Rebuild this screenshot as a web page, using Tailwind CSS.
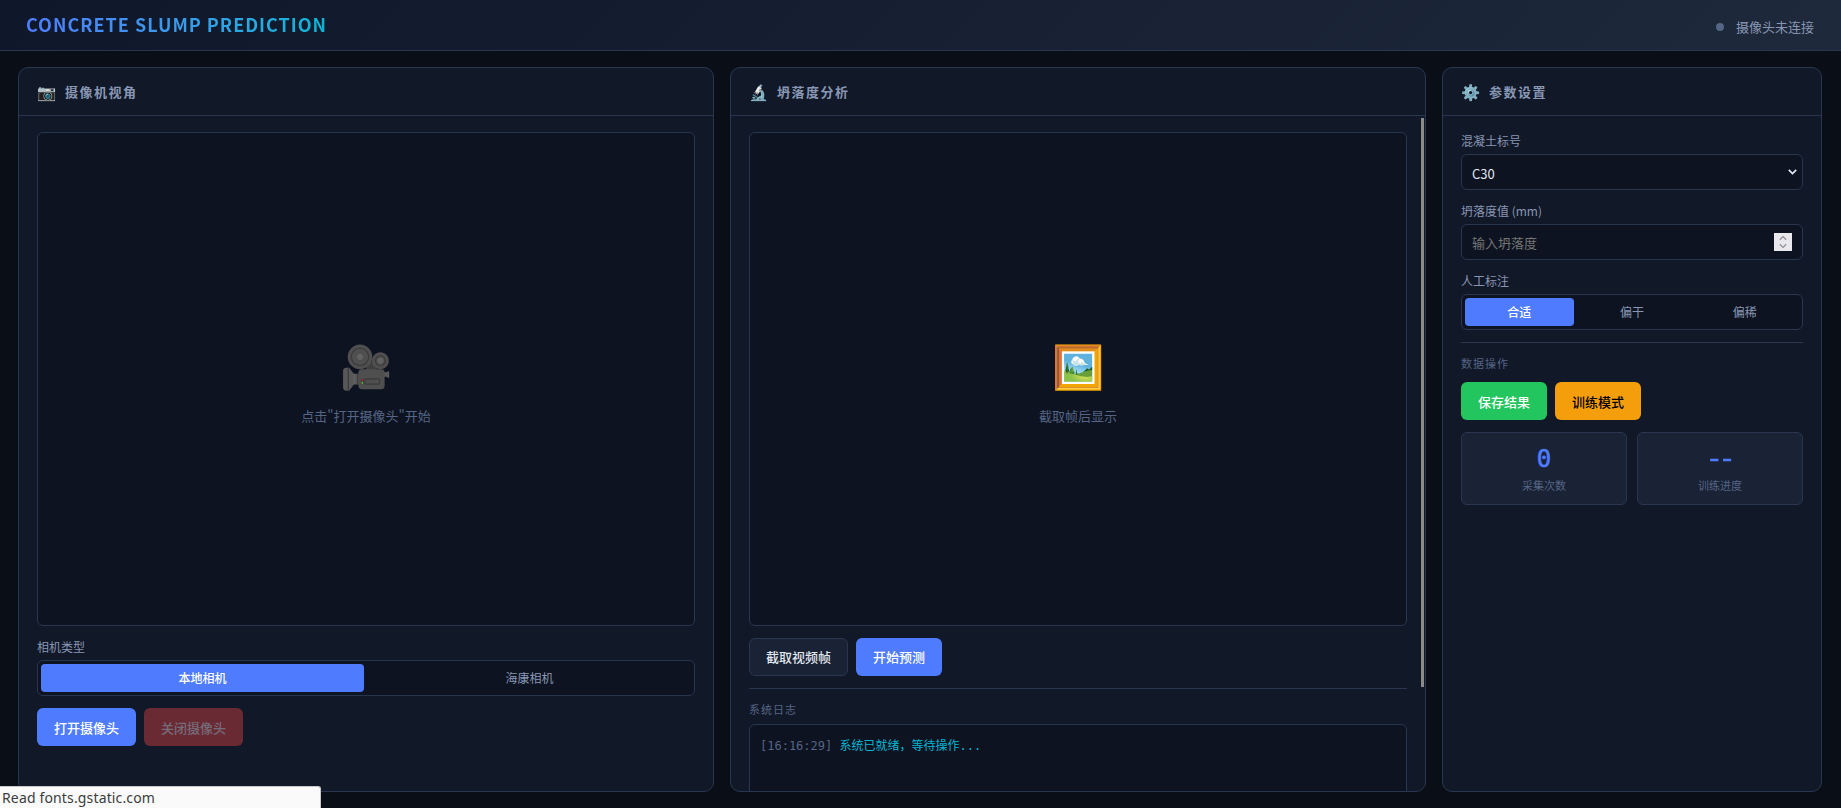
<!DOCTYPE html>
<html lang="zh-CN">
<head>
    <meta charset="UTF-8">
    <meta name="viewport" content="width=device-width, initial-scale=1.0">
    <title>Concrete Slump Prediction</title>
    <script src="https://cdn.jsdelivr.net/npm/@tailwindcss/browser@4"></script>
</head>
<body class="h-screen overflow-hidden flex flex-col bg-[#0a0e17] text-[#e2e8f0] font-['Noto_Sans_CJK_SC',sans-serif] text-[13px]">
    <!-- 顶部 -->
    <header class="h-[51px] shrink-0 flex items-center justify-between pl-[26px] pr-[27px] border-b border-[#2a3650] bg-linear-135 from-[#0f172a] to-[#1e293b]">
        <h1 class="text-[18px] leading-[26px] pb-[2px] font-bold tracking-[1px] bg-linear-90 from-[#4f7cff] to-[#06b6d4] bg-clip-text text-transparent">CONCRETE SLUMP PREDICTION</h1>
        <div class="flex items-center gap-3 text-[#8896b3] pt-[4px]">
            <span class="size-2 rounded-full bg-[#556585]"></span>
            <span class="-mt-px">摄像头未连接</span>
        </div>
    </header>

    <main class="flex-1 min-h-0 grid grid-cols-[696px_696px_380px] gap-4 py-4 pl-[18px]">
        <!-- 摄像机视角 -->
        <section class="flex flex-col min-h-0 overflow-hidden rounded-[10px] border border-[#2a3650] bg-[#111827]">
            <div class="h-12 shrink-0 flex items-center gap-[9px] px-[18px] pt-px border-b border-[#2a3650] text-[#8896b3] font-semibold tracking-[1.5px]">
                <span class="text-[15.5px] tracking-normal -mt-px">📷</span>摄像机视角
            </div>
            <div class="px-[18px] py-4">
                <div class="h-[494px] pt-[2px] flex flex-col items-center justify-center gap-3 rounded-md border border-[#2a3650] bg-[#0d1320] text-[#556585]">
                    <span class="text-[42px] leading-[60px]">🎥</span>
                    <span>点击"打开摄像头"开始</span>
                </div>
                <div class="mt-3 text-xs leading-[17px] text-[#8896b3]">相机类型</div>
                <div class="mt-[5px] h-9 flex gap-1 p-[3px] rounded-md border border-[#2a3650] bg-[#0d1320] text-xs text-[#8896b3]">
                    <button class="flex-1 rounded bg-[#4f7cff] text-white font-medium">本地相机</button>
                    <button class="flex-1 rounded">海康相机</button>
                </div>
                <div class="mt-3 flex gap-2 font-medium">
                    <button class="h-[38px] px-[17px] pt-[2px] rounded-md bg-[#4f7cff] text-white">打开摄像头</button>
                    <button class="h-[38px] px-[17px] pt-[2px] rounded-md bg-[#6a2a34] text-[#756c79]">关闭摄像头</button>
                </div>
            </div>
        </section>

        <!-- 坍落度分析 -->
        <section class="relative flex flex-col min-h-0 overflow-hidden rounded-[10px] border border-[#2a3650] bg-[#111827]">
            <div class="h-12 shrink-0 flex items-center gap-[9px] px-[18px] pt-px border-b border-[#2a3650] text-[#8896b3] font-semibold tracking-[1.5px]">
                <span class="text-[15.5px] tracking-normal -mt-px">🔬</span>坍落度分析
            </div>
            <div class="px-[18px] py-4">
                <div class="h-[494px] pt-[2px] flex flex-col items-center justify-center gap-3 rounded-md border border-[#2a3650] bg-[#0d1320] text-[#556585]">
                    <span class="text-[42px] leading-[60px]">🖼️</span>
                    <span>截取帧后显示</span>
                </div>
                <div class="mt-3 flex gap-2 font-medium">
                    <button class="h-[38px] px-4 rounded-md border border-[#2a3650] bg-[#1a2235]">截取视频帧</button>
                    <button class="h-[38px] px-[17px] rounded-md bg-[#4f7cff] text-white">开始预测</button>
                </div>
                <div class="mt-3 border-t border-[#2a3650] pt-[11px] text-[11px] leading-[18px] tracking-[1px] text-[#556585]">系统日志</div>
                <div class="mt-[6px] h-[160px] px-[10px] py-[10px] rounded-md border border-[#2a3650] bg-[#0d1320] text-xs leading-[22px] font-['DejaVu_Sans_Mono','Noto_Sans_CJK_SC',monospace] text-[#06b6d4]">
                    <span class="text-[#556585]">[16:16:29]</span> <span>系统已就绪，等待操作...</span>
                </div>
            </div>
            <div class="absolute right-[1px] top-[50px] h-[569px] w-[3px] bg-[#8b8b8b]"></div>
        </section>

        <!-- 参数设置 -->
        <section class="flex flex-col min-h-0 overflow-hidden rounded-[10px] border border-[#2a3650] bg-[#111827]">
            <div class="h-12 shrink-0 flex items-center gap-[9px] px-[18px] pt-px border-b border-[#2a3650] text-[#8896b3] font-semibold tracking-[1.5px]">
                <span class="text-[15.5px] tracking-normal -mt-px">⚙️</span>参数设置
            </div>
            <div class="px-[18px] py-4">
                <div class="text-xs leading-[17px] text-[#8896b3]">混凝土标号</div>
                <div class="mt-[5px] h-9 flex items-center justify-between pl-[10px] pr-[5px] rounded-md border border-[#2a3650] bg-[#0d1320]">
                    <span class="pt-[3px]">C30</span>
                    <svg class="w-[9px] h-[6px]" viewBox="0 0 9 6" fill="none" stroke="#e2e8f0" stroke-width="1.7"><path d="M.8.8 4.5 4.6 8.2.8"/></svg>
                </div>
                <div class="mt-3 text-xs leading-[17px] text-[#8896b3]">坍落度值 (mm)</div>
                <div class="mt-[5px] h-9 flex items-center justify-between px-[10px] rounded-md border border-[#2a3650] bg-[#0d1320] text-[#757575]">
                    <span class="pt-px">输入坍落度</span>
                    <svg class="size-[18px] bg-[#e9e9ed]" viewBox="0 0 18 18" fill="none" stroke="#8f8f9d" stroke-width="1.3"><path d="M5.8 6.7 9 3.6l3.2 3.1M5.8 11.3 9 14.4l3.2-3.1"/></svg>
                </div>
                <div class="mt-3 text-xs leading-[17px] text-[#8896b3]">人工标注</div>
                <div class="mt-[5px] h-9 flex gap-1 p-[3px] rounded-md border border-[#2a3650] bg-[#0d1320] text-xs text-[#8896b3]">
                    <button class="flex-1 rounded bg-[#4f7cff] text-white font-medium">合适</button>
                    <button class="flex-1 rounded">偏干</button>
                    <button class="flex-1 rounded">偏稀</button>
                </div>
                <div class="mt-3 border-t border-[#2a3650] pt-[11px] text-[11px] leading-[18px] tracking-[1px] text-[#556585]">数据操作</div>
                <div class="mt-[10px] flex gap-2 font-medium">
                    <button class="h-[38px] px-[17px] pt-[2px] rounded-md bg-[#22c55e] text-white">保存结果</button>
                    <button class="h-[38px] px-[17px] pt-[2px] rounded-md bg-[#f59e0b] text-black">训练模式</button>
                </div>
                <div class="mt-3 grid grid-cols-2 gap-[10px] text-center">
                    <div class="h-[73px] pt-[10px] rounded-md border border-[#2a3650] bg-[#1a2235]">
                        <div class="text-[24px] leading-[32px] [-webkit-text-stroke:0.6px_#4f7cff] font-['DejaVu_Sans_Mono',monospace] text-[#4f7cff]">0</div>
                        <div class="text-[11px] leading-[20px] text-[#556585]">采集次数</div>
                    </div>
                    <div class="h-[73px] pt-[10px] rounded-md border border-[#2a3650] bg-[#1a2235]">
                        <div class="pr-[3px] scale-x-[1.22] text-[24px] leading-[32px] tracking-[-4px] [-webkit-text-stroke:0.6px_#4f7cff] font-['DejaVu_Sans_Mono',monospace] text-[#4f7cff]">--</div>
                        <div class="text-[11px] leading-[20px] text-[#556585]">训练进度</div>
                    </div>
                </div>
            </div>
        </section>
    </main>

    <!-- 浏览器状态栏 -->
    <div class="fixed left-0 bottom-0 w-[321px] h-[22px] pl-[2px] rounded-tr-[3px] border-t border-r border-[#c8c8c8] bg-[#fafafa] text-[#3d3d3d] text-[14px] leading-[22px] tracking-[0.15px] font-['Noto_Sans',sans-serif]">Read fonts.gstatic.com</div>
</body>
</html>
